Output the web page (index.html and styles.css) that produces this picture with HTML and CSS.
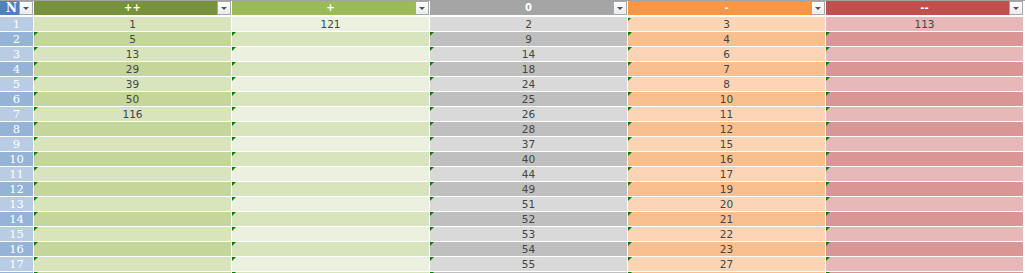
FILE: index.html
```html
<!DOCTYPE html>
<html>
<head>
<meta charset="utf-8">
<link rel="stylesheet" href="styles.css">
</head>
<body>
<div class="sheet">
  <div class="grid" id="grid">
    <div class="hd hd-n"><span>N</span><i class="dd"></i></div>
    <div class="hd hd-a">++<i class="dd"></i></div>
    <div class="hd hd-b">+<i class="dd"></i></div>
    <div class="hd hd-c">0<i class="dd"></i></div>
    <div class="hd hd-d">-<i class="dd"></i></div>
    <div class="hd hd-e">--<i class="dd"></i></div>
  </div>
</div>
<script src="app.js"></script>
</body>
</html>
```
FILE: app.js
```js
const cols = [
  [1,5,13,29,39,50,116],
  [121],
  [2,9,14,18,24,25,26,28,37,40,44,49,51,52,53,54,55],
  [3,4,6,7,8,10,11,12,15,16,17,19,20,21,22,23,27],
  [113]
];
const names = ['a','b','c','d','e'];
const grid = document.getElementById('grid');
for (let r = 0; r < 18; r++) {
  const parity = r % 2 === 0 ? 'odd' : 'even';
  const n = document.createElement('div');
  n.className = 'cell num ' + parity;
  n.textContent = r < 17 ? r + 1 : '';
  grid.appendChild(n);
  for (let c = 0; c < 5; c++) {
    const d = document.createElement('div');
    let cls = 'cell c-' + names[c] + ' ' + parity;
    if (r > 0) cls += ' tri';
    if (r === 0 && c === 3) cls += ' tri-sm';
    d.className = cls;
    const v = cols[c][r];
    d.textContent = v === undefined ? '' : v;
    grid.appendChild(d);
  }
}
```
FILE: styles.css
```css
html, body {
  margin: 0;
  padding: 0;
  background: #ffffff;
}
.sheet {
  width: 1025px;
  height: 273px;
  overflow: hidden;
  border-top: 1px solid #a3a3a3;
}
.grid {
  display: grid;
  grid-template-columns: 33px repeat(5, 197px);
  grid-template-rows: 15px;
  grid-auto-rows: 14px;
  gap: 1px;
  background: #ffffff;
}
.hd {
  position: relative;
  color: #ffffff;
  font-family: "DejaVu Sans", sans-serif;
  font-weight: bold;
  font-size: 10px;
  line-height: 14px;
  text-align: center;
  height: 14px;
}
.hd-n {
  background: #4f81bd;
  text-align: right;
  padding-right: 16px;
  font-family: "DejaVu Serif", serif;
  font-size: 12px;
}
.hd-a { background: #76923c; }
.hd-b { background: #9bbb59; }
.hd-c { background: #a5a5a5; }
.hd-d { background: #f79646; }
.hd-e { background: #c0504d; }
.dd {
  position: absolute;
  right: 0;
  top: 0;
  width: 12px;
  height: 12px;
  border: 1px solid #a7a7a7;
  background: linear-gradient(#ffffff, #e9ebee);
}
.dd::after {
  content: "";
  position: absolute;
  left: 3px;
  top: 5px;
  border-left: 3px solid transparent;
  border-right: 3px solid transparent;
  border-top: 3px solid #555555;
}
.cell {
  position: relative;
  font-family: "DejaVu Sans", sans-serif;
  font-size: 10.5px;
  line-height: 14px;
  text-align: center;
  color: #454545;
}
.num {
  font-family: "DejaVu Serif", serif;
  font-size: 11.5px;
  color: #ffffff;
}
.num.odd { background: #b8cce4; }
.num.even { background: #95b3d7; }
.c-a.odd { background: #d8e4bc; }
.c-a.even { background: #c4d79b; }
.c-b.odd { background: #ebf1de; }
.c-b.even { background: #d8e4bc; }
.c-c.odd { background: #d9d9d9; }
.c-c.even { background: #bfbfbf; }
.c-d.odd { background: #fcd5b4; }
.c-d.even { background: #fabf8f; }
.c-e.odd { background: #e6b8b7; }
.c-e.even { background: #da9694; }
.tri::before, .tri-sm::before {
  content: "";
  position: absolute;
  left: 0;
  top: 0;
  border-top: 4px solid #008000;
  border-right: 4px solid transparent;
}
.tri-sm::before {
  top: 1px;
  border-top-width: 3px;
  border-right-width: 3px;
}
```
